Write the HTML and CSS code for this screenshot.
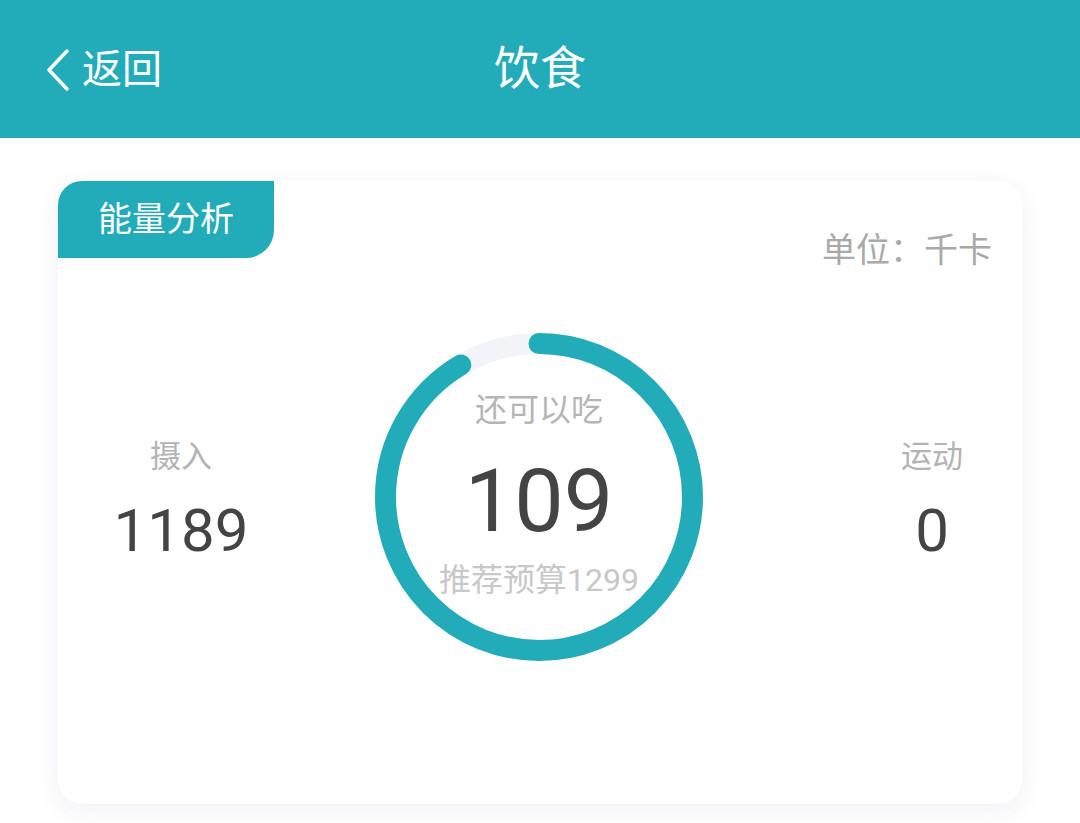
FILE: index.html
```html
<!DOCTYPE html>
<html lang="zh-CN">
<head>
  <meta charset="UTF-8">
  <title>饮食</title>
  <link rel="stylesheet" href="styles.css">
</head>
<body>

  <div class="topbar">
    <div class="back">
      <svg class="back-icon" width="24" height="44" viewBox="0 0 24 44">
        <polyline points="21,3 3,22 21,41" fill="none" stroke="#fff" stroke-width="3.5" stroke-linecap="round" stroke-linejoin="round"/>
      </svg>
      <span>返回</span>
    </div>
    <div class="title">饮食</div>
  </div>

  <div class="card">
    <div class="card-head">
      <div class="tag">能量分析</div>
      <div class="unit">单位：千卡</div>
    </div>

    <div class="stats">
      <div class="side left">
        <div class="label">摄入</div>
        <div class="num">1189</div>
      </div>

      <div class="ring">
        <svg class="ring-svg" width="328" height="328" viewBox="0 0 328 328">
          <circle cx="164" cy="164" r="153.5" fill="none" stroke="#f2f4f9" stroke-width="21"/>
          <circle cx="164" cy="164" r="153.5" fill="none" stroke="#22acb9" stroke-width="21"
                  stroke-linecap="round" stroke-dasharray="882 1000" transform="rotate(-90 164 164)"/>
        </svg>
        <div class="ring-text">
          <div class="ring-label">还可以吃</div>
          <div class="ring-num">109</div>
          <div class="ring-sub">推荐预算1299</div>
        </div>
      </div>

      <div class="side right">
        <div class="label">运动</div>
        <div class="num">0</div>
      </div>
    </div>
  </div>

</body>
</html>
```

FILE: styles.css
```css
body {
  margin: 0;
  background-color: #fff;
  font-family: 'Roboto', 'Noto Sans CJK SC', sans-serif;
  width: 1080px;
  height: 823px;
  overflow: hidden;
}

.topbar {
  height: 138px;
  background-color: #22acb9;
  display: flex;
  align-items: center;
  justify-content: center;
  position: relative;
  color: #fff;
}

.back {
  position: absolute;
  left: 46px;
  top: 46px;
  display: flex;
  align-items: center;
  font-size: 40px;
  line-height: 48px;
}

.back-icon {
  margin-right: 12px;
}

.title {
  font-size: 46px;
  line-height: 56px;
  margin-top: -2px;
}

.card {
  margin: 43px 58px 0;
  height: 623px;
  background-color: #fff;
  border-radius: 24px;
  box-shadow: 0 6px 26px rgba(40, 50, 120, 0.07);
}

.card-head {
  display: flex;
  justify-content: space-between;
  align-items: flex-start;
}

.tag {
  width: 216px;
  height: 77px;
  line-height: 77px;
  text-align: center;
  background-color: #22acb9;
  color: #fff;
  font-size: 34px;
  border-radius: 24px 0 28px 0;
}

.unit {
  margin-top: 49px;
  margin-right: 30px;
  font-size: 34px;
  line-height: 40px;
  color: #a9a9a9;
}

.stats {
  display: flex;
  align-items: flex-start;
  margin-top: 63px;
}

.side {
  margin-top: 104px;
  text-align: center;
}

.side.left {
  width: 246px;
}

.side.right {
  width: 180px;
  margin-left: auto;
}

.label {
  font-size: 31px;
  line-height: 40px;
  color: #b3b3b3;
}

.num {
  margin-top: 18px;
  font-size: 60px;
  line-height: 72px;
  color: #444;
}

.ring {
  position: relative;
  width: 328px;
  height: 328px;
  margin-left: 71px;
}

.ring-svg {
  position: absolute;
  left: 0;
  top: 0;
}

.ring-text {
  position: relative;
  padding-top: 57px;
  text-align: center;
}

.ring-label {
  font-size: 32px;
  line-height: 40px;
  color: #b5b5b5;
}

.ring-num {
  font-size: 88px;
  line-height: 80px;
  color: #444;
  margin-top: 31px;
}

.ring-sub {
  font-size: 32px;
  line-height: 40px;
  color: #c8c8c8;
  margin-top: 19px;
}
```
